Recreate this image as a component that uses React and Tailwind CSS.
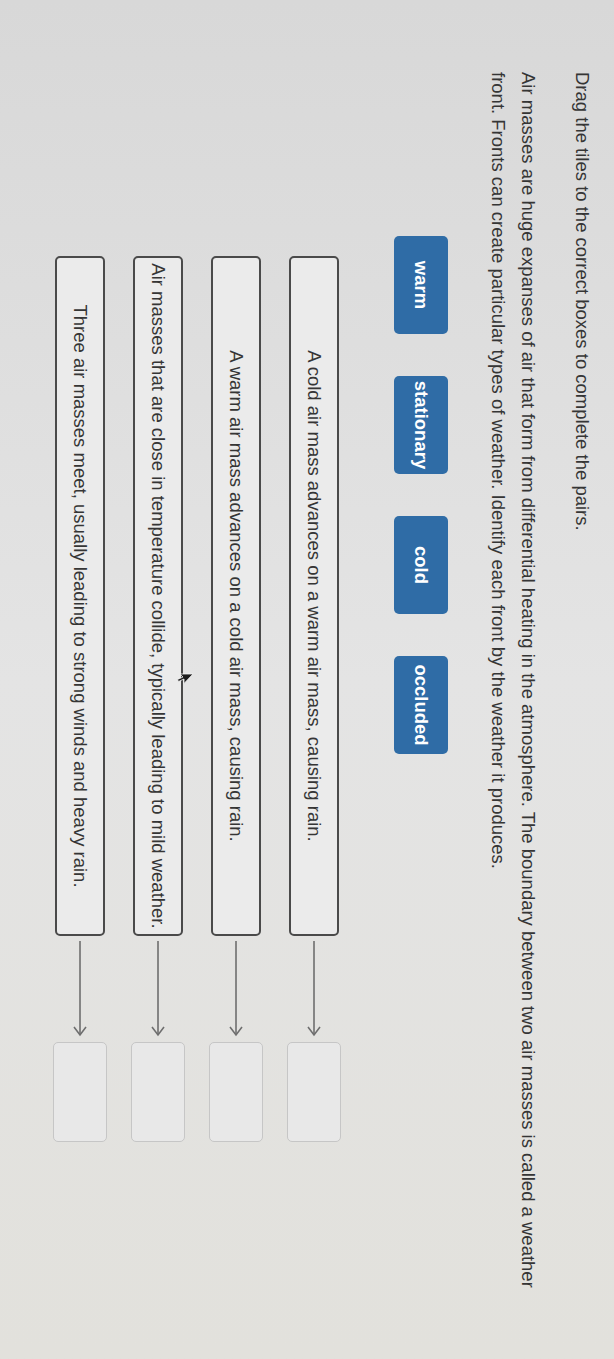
import React from "react";

const tiles = ["warm", "stationary", "cold", "occluded"];

const pairs = [
  "A cold air mass advances on a warm air mass, causing rain.",
  "A warm air mass advances on a cold air mass, causing rain.",
  "Air masses that are close in temperature collide, typically leading to mild weather.",
  "Three air masses meet, usually leading to strong winds and heavy rain.",
];

function Arrow() {
  return (
    <svg width="100" height="20" viewBox="0 0 100 20" className="ml-[3px] shrink-0">
      <line x1="2" y1="10" x2="96" y2="10" stroke="#6e6e6e" strokeWidth="1.6" />
      <polyline points="88,4 96,10 88,16" fill="none" stroke="#6e6e6e" strokeWidth="1.6" />
    </svg>
  );
}

function Cursor() {
  return (
    <svg width="12" height="18" viewBox="0 0 12 18" className="absolute left-[673px] top-[420px]">
      <path d="M1 1 L1 14 L4 11 L6.5 16.5 L8.5 15.5 L6 10 L10.5 10 Z" fill="#1c1c1c" stroke="#f2f2f2" strokeWidth="0.8" />
    </svg>
  );
}

export default function App() {
  return (
    <div className="w-[614px] h-[1359px] overflow-hidden bg-linear-to-b from-[#d8d8d8] via-[#e4e4e4] to-[#e2e1dc]">
      {/* the worksheet is laid out landscape and turned a quarter clockwise */}
      <div className="relative w-[1359px] h-[614px] origin-top-left translate-x-[614px] rotate-90 pl-[72px] pt-[20px] font-['Liberation_Sans',Arial,sans-serif] text-[#353535]">
        <p className="text-[18.5px] leading-[24px]">Drag the tiles to the correct boxes to complete the pairs.</p>
        <p className="mt-[27px] text-[18.5px] leading-[30px] whitespace-nowrap">
          Air masses are huge expanses of air that form from differential heating in the atmosphere. The boundary between two air masses is called a weather
          <br />
          front. Fronts can create particular types of weather. Identify each front by the weather it produces.
        </p>

        <div className="ml-[164px] mt-[35px] flex gap-[42px]">
          {tiles.map((t) => (
            <div
              key={t}
              className="w-[98px] h-[54px] rounded-[5px] bg-[#2f6ca6] flex items-center justify-center text-white text-[18.5px] font-bold"
            >
              {t}
            </div>
          ))}
        </div>

        <div className="ml-[184px] mt-[53px] flex flex-col gap-[24px]">
          {pairs.map((p) => (
            <div key={p} className="flex items-center">
              <div className="w-[680px] h-[50px] rounded-[5px] border-2 border-[#4a4a4a] bg-[#ebebeb] flex items-center justify-center text-[18.5px] whitespace-nowrap">
                {p}
              </div>
              <Arrow />
              <div className="ml-[3px] w-[100px] h-[54px] rounded-[5px] border border-[#c6c6c6] bg-[#e8e8e8]" />
            </div>
          ))}
        </div>

        <Cursor />
      </div>
    </div>
  );
}
